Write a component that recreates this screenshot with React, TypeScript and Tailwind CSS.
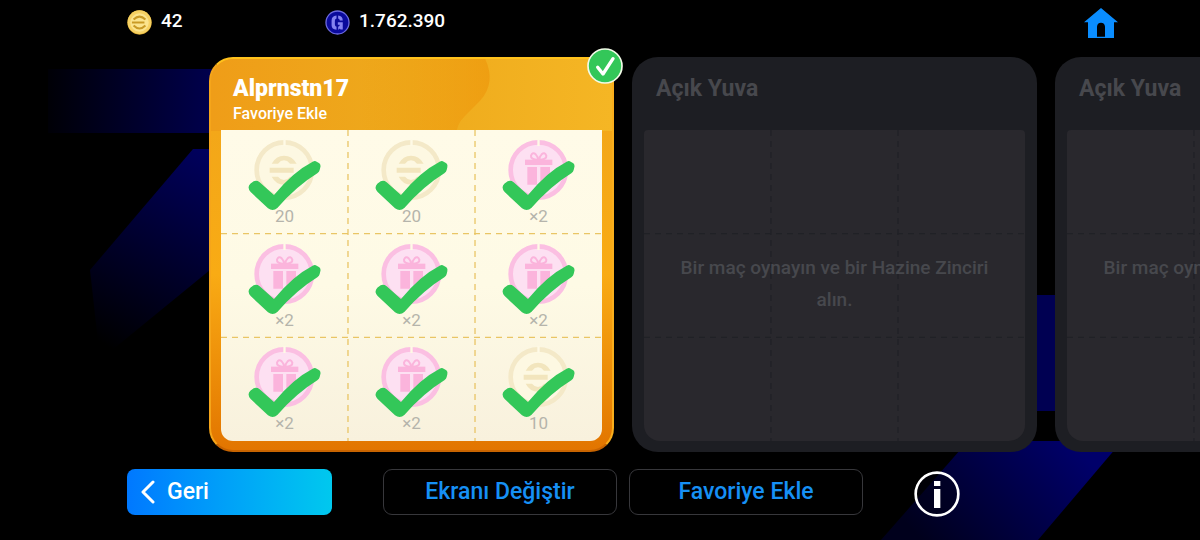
import { useId } from 'react';

type Reward = { kind: 'coin' | 'gift'; amount: string };

const rewards: Reward[] = [
  { kind: 'coin', amount: '20' },
  { kind: 'coin', amount: '20' },
  { kind: 'gift', amount: '×2' },
  { kind: 'gift', amount: '×2' },
  { kind: 'gift', amount: '×2' },
  { kind: 'gift', amount: '×2' },
  { kind: 'gift', amount: '×2' },
  { kind: 'gift', amount: '×2' },
  { kind: 'coin', amount: '10' },
];

function Backdrop() {
  return (
    <svg className="absolute inset-0 h-full w-full" viewBox="0 0 1200 540" preserveAspectRatio="xMidYMid slice" aria-hidden="true">
      <defs>
        <linearGradient id="bd-a" x1="48" x2="210" y1="0" y2="0" gradientUnits="userSpaceOnUse">
          <stop offset="0" stopColor="#000006" />
          <stop offset="1" stopColor="#00004c" />
        </linearGradient>
        <linearGradient id="bd-b" x1="215" x2="105" y1="160" y2="345" gradientUnits="userSpaceOnUse">
          <stop offset="0" stopColor="#00005c" />
          <stop offset="1" stopColor="#000000" />
        </linearGradient>
        <linearGradient id="bd-c" x1="1070" x2="940" y1="440" y2="560" gradientUnits="userSpaceOnUse">
          <stop offset="0" stopColor="#00006a" />
          <stop offset="1" stopColor="#00001c" />
        </linearGradient>
      </defs>
      <rect x="48" y="69" width="250" height="64" fill="url(#bd-a)" />
      <path d="M193 149H320V180L100 360L90 270Z" fill="url(#bd-b)" />
      <rect x="1000" y="295" width="100" height="116" fill="#000052" />
      <path d="M968 441H1122L1038 540H881Z" fill="url(#bd-c)" />
    </svg>
  );
}

function GoldCoin() {
  return (
    <svg className="size-[25px]" viewBox="0 0 76 76" aria-hidden="true">
      <circle cx="38" cy="38" r="37" fill="#d9a72c" />
      <circle cx="38" cy="37" r="36" fill="#f6d163" />
      <circle cx="38" cy="38" r="28" fill="#fbe48e" />
      <g fill="none" stroke="#c99a26" strokeWidth="6">
        <path d="M20 29Q38 11 56 29" />
        <path d="M15 38H53" />
        <path d="M20 47Q38 65 56 47" />
      </g>
    </svg>
  );
}

function GpCoin() {
  return (
    <svg className="size-[25px]" viewBox="0 0 76 76" aria-hidden="true">
      <circle cx="38" cy="38" r="35" fill="#0a0a9c" stroke="#6c6ae0" strokeWidth="4" />
      <path d="M35 17Q20 19 20 32V46Q20 58 35 60V51Q30 50 30 44V33Q30 27 35 26ZM40 17Q54 18 54 32H45Q45 27 40 26ZM39 37H54V59H47L45 56Q43 59 40 60V51Q45 50 45 45H39Z" fill="#8482f0" />
    </svg>
  );
}

function RewardArt({ kind }: { kind: Reward['kind'] }) {
  const gift = kind === 'gift';
  return (
    <svg className="h-[70px] w-20 overflow-visible" viewBox="135 291 240 210" aria-hidden="true">
      <circle cx="253" cy="390" r="83" fill={gift ? '#fde0f2' : '#fdf8e2'} stroke={gift ? '#fbbfe2' : '#f4e9c8'} strokeWidth="14" />
      <rect x="250" y="298" width="7" height="20" fill="#fefae6" />
      {gift ? (
        <g>
          <g fill="none" stroke="#fbb4dc" strokeWidth="6">
            <path d="M253 360Q229 358 231 347Q236 335 245 343Q252 350 253 360Z" />
            <path d="M255 360Q279 358 277 347Q272 335 263 343Q256 350 255 360Z" />
          </g>
          <rect x="213" y="359" width="82" height="16" fill="#fbb4dc" />
          <path d="M220 381H249V434H220ZM259 381H288V434H259Z" fill="#fbb4dc" />
        </g>
      ) : (
        <g fill="#f2e5bd">
          <path d="M215 371Q228 347 252 347Q277 347 290 371H270Q262 361 252 361Q242 361 234 371Z" />
          <path d="M209 383H281V398H209Z" />
          <path d="M215 410Q228 434 252 434Q277 434 290 410H270Q262 420 252 420Q242 420 234 410Z" />
        </g>
      )}
      <path
        d="M151 431L161 424Q170 420 179 427L222 465Q278 396 338 365Q345 361 350 365L358 370Q363 375 361 382L359 390Q358 396 352 400Q290 438 232 504Q219 515 204 505L152 456Q140 442 151 431Z"
        fill="#33c759"
      />
    </svg>
  );
}

function GridLines({ color }: { color: string }) {
  return (
    <svg className="pointer-events-none absolute inset-0 h-full w-full" aria-hidden="true">
      <g stroke={color} strokeWidth="1.3" strokeDasharray="6 5">
        <line x1="33.33%" x2="33.33%" y1="0" y2="100%" />
        <line x1="66.67%" x2="66.67%" y1="0" y2="100%" />
        <line x1="0" x2="100%" y1="33.33%" y2="33.33%" />
        <line x1="0" x2="100%" y1="66.67%" y2="66.67%" />
      </g>
    </svg>
  );
}

function CardWave() {
  const id = useId();
  return (
    <svg className="absolute inset-0 h-full w-full" viewBox="0 0 405 395" preserveAspectRatio="none" aria-hidden="true">
      <defs>
        <linearGradient id={id} x1="0" x2="1" y1="0" y2="0">
          <stop offset="0" stopColor="#ee980c" stopOpacity="0" />
          <stop offset="1" stopColor="#ee980c" />
        </linearGradient>
      </defs>
      <path d="M150 0H277Q288 24 272 42L256 58Q248 66 248 76H150Z" fill={`url(#${id})`} opacity="0.7" />
    </svg>
  );
}

function FilledCard() {
  return (
    <article className="relative flex w-[405px] shrink-0 flex-col rounded-3xl border-2 border-t-[#ffc21c] border-r-[#f9ae1c] border-b-[#c86400] border-l-[#f5a51a] bg-linear-to-b from-[#f0a51b] via-[#f9ab14] via-55% to-[#e27500] px-[10px] pb-[9px]">
      <div className="absolute inset-0 overflow-hidden rounded-[22px]">
        <div className="h-[72px] bg-linear-to-r from-[#ef9d18] via-[#eeaa1c] to-[#f5b624]" />
        <CardWave />
      </div>
      <header className="relative flex h-[71px] flex-col px-3 pt-4 text-white">
        <h2 className="text-[23px] leading-7 font-black">Alprnstn17</h2>
        <p className="text-base leading-[22px] font-medium">Favoriye Ekle</p>
      </header>
      <div className="relative grid flex-1 grid-cols-3 grid-rows-3 overflow-hidden rounded-b-xl bg-linear-to-b from-[#fffbe8] via-[#fefae5] to-[#f8f1dd]">
        <GridLines color="#e9c565" />
        {rewards.map((r, i) => (
          <div key={i} className="relative flex flex-col items-center pt-[7px]">
            <RewardArt kind={r.kind} />
            <span className="text-[17px] leading-[18px] text-[#b5b4ab]">{r.amount}</span>
          </div>
        ))}
      </div>
      <svg className="absolute -top-[11px] -right-[11px] size-9" viewBox="0 0 108 108" aria-hidden="true">
        <circle cx="54" cy="54" r="51" fill="#33c759" stroke="#f2fbe8" strokeWidth="5" />
        <path d="M32 58L48 78L78 32" fill="none" stroke="#fff" strokeWidth="10" strokeLinecap="round" strokeLinejoin="round" />
      </svg>
    </article>
  );
}

function EmptyCard() {
  return (
    <article className="flex w-[405px] shrink-0 flex-col rounded-[26px] bg-[#1d1e23] px-3 pb-[11px] text-[#47484d]">
      <header className="h-[73px] px-3 pt-[18px]">
        <h2 className="text-[23px] leading-7 font-bold">Açık Yuva</h2>
      </header>
      <div className="relative flex flex-1 items-center justify-center overflow-hidden rounded-t-sm rounded-b-2xl bg-[#29282d] px-7 pb-1">
        <GridLines color="#202126" />
        <p className="relative text-center text-[19px] leading-8 font-medium">Bir maç oynayın ve bir Hazine Zinciri alın.</p>
      </div>
    </article>
  );
}

export default function App() {
  return (
    <div className="relative flex min-h-screen flex-col overflow-hidden bg-black font-[Roboto,'Noto_Sans',sans-serif]">
      <Backdrop />
      <header className="relative flex h-[45px] items-center pr-[82px] pl-[127px] text-[19px] leading-6 font-medium text-white">
        <div className="flex w-[198px] items-center gap-[9px]">
          <GoldCoin />
          <span className="pb-1">42</span>
        </div>
        <div className="flex items-center gap-[9px]">
          <GpCoin />
          <span className="pb-1">1.762.390</span>
        </div>
        <button type="button" aria-label="Ana sayfa" className="ml-auto">
          <svg className="h-[30px] w-[34px]" viewBox="0 0 102 90" aria-hidden="true">
            <path d="M51 0L102 43H90V90H12V43H0ZM39 86H63V56Q62 44 51 44Q40 44 39 56Z" fill="#0a8dff" fillRule="evenodd" />
          </svg>
        </button>
      </header>
      <main className="relative flex flex-1 [scrollbar-width:none] gap-[18px] overflow-x-auto pt-3 pl-[209px]">
        <FilledCard />
        <EmptyCard />
        <EmptyCard />
      </main>
      <footer className="relative flex h-[88px] items-start pt-[17px] pl-[127px] text-[23px] leading-7 font-medium text-[#1690f5]">
        <button type="button" className="mr-[51px] flex h-[46px] w-[205px] items-center gap-3 rounded-lg bg-linear-to-r from-[#0078ff] to-[#00c8ee] pl-[14px] text-white">
          <svg className="h-6 w-[14px]" viewBox="0 0 14 24" fill="none" stroke="currentColor" strokeWidth="3" strokeLinecap="round" strokeLinejoin="round" aria-hidden="true">
            <path d="M12 2L2 12L12 22" />
          </svg>
          Geri
        </button>
        <button type="button" className="mr-3 h-[46px] w-[234px] rounded-[9px] border border-[#37373b] bg-black">Ekranı Değiştir</button>
        <button type="button" className="mr-[51px] h-[46px] w-[234px] rounded-[9px] border border-[#37373b] bg-black">Favoriye Ekle</button>
        <button type="button" aria-label="Bilgi" className="mt-0.5">
          <svg className="size-[46px]" viewBox="0 0 138 138" aria-hidden="true">
            <circle cx="69" cy="69" r="64" fill="#000010" fillOpacity="0.4" stroke="#fff" strokeWidth="8" />
            <path d="M60 30H79V45H60ZM60 54H79V111H60Z" fill="#fff" />
          </svg>
        </button>
      </footer>
    </div>
  );
}
